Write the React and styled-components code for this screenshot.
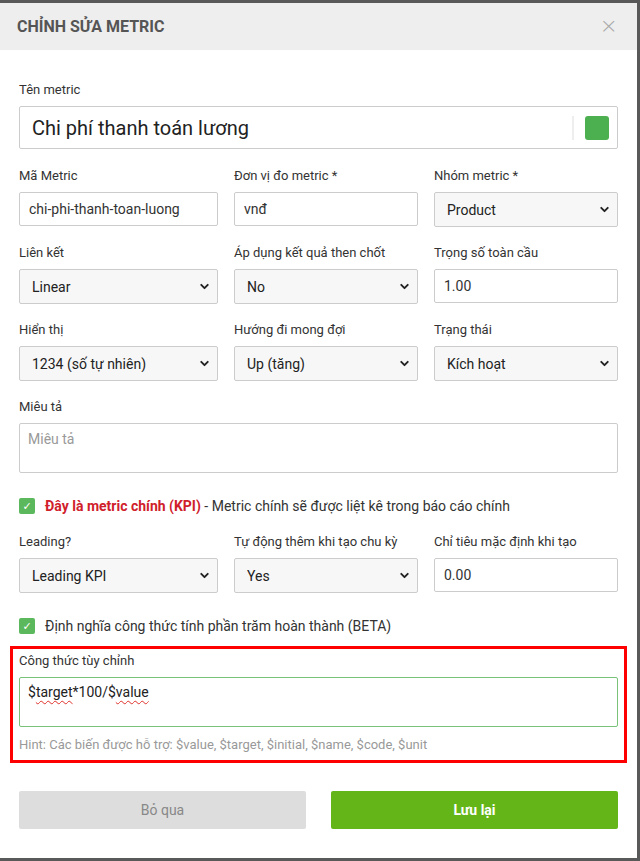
import React from "react";
import styled, { createGlobalStyle } from "styled-components";
import { ChevronDown } from "lucide-react";

const GlobalStyle = createGlobalStyle`
  html, body {
    margin: 0;
    padding: 0;
    background: #595959;
  }
  body {
    font-family: Roboto, "Noto Sans", "Liberation Sans", sans-serif;
    color: #333;
  }
  * { box-sizing: border-box; }
`;

const Backdrop = styled.div`
  padding: 3px 3px 3px 0;
  min-height: 861px;
`;

const Modal = styled.div`
  background: #fff;
  height: 855px;
  display: flex;
  flex-direction: column;
`;

const Header = styled.div`
  height: 47px;
  background: #eeeeee;
  display: flex;
  align-items: center;
  justify-content: space-between;
  padding: 0 17px;
`;

const Title = styled.h4`
  margin: 0;
  font-size: 16px;
  font-weight: 700;
  color: #555;
  text-transform: uppercase;
`;

const Close = styled.button`
  border: 0;
  background: none;
  padding: 0;
  color: #aaa;
  font-size: 22px;
  line-height: 1;
  font-family: "DejaVu Sans", sans-serif;
  font-weight: 300;
  cursor: pointer;
  margin-top: -2px;
  margin-right: 2px;
`;

const Body = styled.div`
  padding: 31px 19px 0;
`;

const Group = styled.div`
  margin-bottom: ${(p) => p.$mb ?? 17}px;
`;

const Label = styled.label`
  display: block;
  font-size: 13px;
  line-height: 17px;
  margin-bottom: 8px;
  color: #333;
`;

const Row = styled.div`
  display: grid;
  grid-template-columns: 199px 1fr 1fr;
  column-gap: 16px;
`;

const Input = styled.input`
  display: block;
  width: 100%;
  height: 34px;
  border: 1px solid #ccc;
  border-radius: 2px;
  padding: 0 9px;
  font-family: inherit;
  font-size: 14px;
  color: #333;
  background: #fff;
  outline: none;
`;

const NameBox = styled.div`
  height: 43px;
  border: 1px solid #ccc;
  border-radius: 2px;
  display: flex;
  align-items: center;
  padding: 0 8px 0 12px;
`;

const NameInput = styled.input`
  flex: 1;
  border: 0;
  outline: none;
  font-family: inherit;
  font-size: 20px;
  color: #222;
  padding: 0;
  background: transparent;
`;

const Divider = styled.span`
  width: 2px;
  height: 24px;
  background: #eee;
  margin: 0 11px 0 0;
`;

const Swatch = styled.span`
  width: 24px;
  height: 24px;
  border-radius: 3px;
  background: ${(p) => p.$color};
`;

const SelectWrap = styled.div`
  position: relative;
`;

const Select = styled.select`
  display: block;
  width: 100%;
  height: 35px;
  appearance: none;
  border: 1px solid #ccc;
  border-radius: 2px;
  background: #f7f7f7;
  padding: 0 28px 0 12px;
  font-family: inherit;
  font-size: 14px;
  color: #222;
  outline: none;
`;

const Arrow = styled(ChevronDown)`
  position: absolute;
  right: 7px;
  top: 11px;
  pointer-events: none;
  color: #222;
`;

const TextArea = styled.textarea`
  display: block;
  width: 100%;
  height: 50px;
  border: 1px solid #ccc;
  border-radius: 2px;
  padding: 7px 8px;
  font-family: inherit;
  font-size: 14px;
  color: #333;
  resize: none;
  outline: none;
  &::placeholder {
    color: #999;
  }
`;

const CheckRow = styled.label`
  display: flex;
  align-items: center;
  gap: 10px;
  height: 20px;
  margin: ${(p) => p.$mt}px 0 ${(p) => p.$mb}px;
  font-size: 14px;
  color: #333;
`;

const Box = styled.span`
  width: 16px;
  height: 16px;
  border-radius: 2px;
  background: #5cb85c;
  color: #fff;
  display: inline-flex;
  align-items: center;
  justify-content: center;
  font-size: 11px;
  font-family: "DejaVu Sans", sans-serif;
`;

const Strong = styled.strong`
  color: #d0202a;
  font-weight: 700;
`;

const Highlight = styled.div`
  margin: 0 -9px;
  border: 3px solid #ff0000;
  padding: 3px 6px 7px;
`;

const FormulaBox = styled.div`
  height: 50px;
  border: 1px solid #78c27a;
  border-radius: 2px;
  padding: 6px 8px;
  font-size: 14px;
  color: #222;
`;

const Typo = styled.span`
  text-decoration: underline wavy #e0312b;
  text-decoration-thickness: 1px;
  text-underline-offset: 3px;
`;

const Hint = styled.p`
  margin: 10px 0 0;
  font-size: 13px;
  line-height: 16px;
  color: #999;
`;

const Actions = styled.div`
  display: grid;
  grid-template-columns: 1fr 1fr;
  column-gap: 25px;
  margin-top: 28px;
`;

const Button = styled.button`
  height: 38px;
  border: 0;
  border-radius: 2px;
  font-family: inherit;
  font-size: 14px;
  cursor: pointer;
  background: ${(p) => (p.$primary ? "#64b618" : "#dddddd")};
  color: ${(p) => (p.$primary ? "#fff" : "#888")};
  font-weight: ${(p) => (p.$primary ? 700 : 400)};
`;

function Field({ label, children }) {
  return (
    <div>
      <Label>{label}</Label>
      {children}
    </div>
  );
}

function Dropdown({ value, options }) {
  return (
    <SelectWrap>
      <Select defaultValue={value}>
        {options.map((o) => (
          <option key={o}>{o}</option>
        ))}
      </Select>
      <Arrow size={13} strokeWidth={3.5} />
    </SelectWrap>
  );
}

export default function App() {
  return (
    <>
      <GlobalStyle />
      <Backdrop>
        <Modal>
          <Header>
            <Title>Chỉnh sửa metric</Title>
            <Close>×</Close>
          </Header>
          <Body>
            <Group $mb={18}>
              <Label>Tên metric</Label>
              <NameBox>
                <NameInput defaultValue="Chi phí thanh toán lương" />
                <Divider />
                <Swatch $color="#4caf50" />
              </NameBox>
            </Group>

            <Group>
              <Row>
                <Field label="Mã Metric">
                  <Input defaultValue="chi-phi-thanh-toan-luong" />
                </Field>
                <Field label="Đơn vị đo metric *">
                  <Input defaultValue="vnđ" />
                </Field>
                <Field label="Nhóm metric *">
                  <Dropdown value="Product" options={["Product", "Marketing", "Sales"]} />
                </Field>
              </Row>
            </Group>

            <Group>
              <Row>
                <Field label="Liên kết">
                  <Dropdown value="Linear" options={["Linear", "Step"]} />
                </Field>
                <Field label="Áp dụng kết quả then chốt">
                  <Dropdown value="No" options={["No", "Yes"]} />
                </Field>
                <Field label="Trọng số toàn cầu">
                  <Input defaultValue="1.00" />
                </Field>
              </Row>
            </Group>

            <Group>
              <Row>
                <Field label="Hiển thị">
                  <Dropdown value="1234 (số tự nhiên)" options={["1234 (số tự nhiên)", "12.34 (số thập phân)"]} />
                </Field>
                <Field label="Hướng đi mong đợi">
                  <Dropdown value="Up (tăng)" options={["Up (tăng)", "Down (giảm)"]} />
                </Field>
                <Field label="Trạng thái">
                  <Dropdown value="Kích hoạt" options={["Kích hoạt", "Tạm dừng"]} />
                </Field>
              </Row>
            </Group>

            <Group $mb={0}>
              <Label>Miêu tả</Label>
              <TextArea placeholder="Miêu tả" />
            </Group>

            <CheckRow $mt={23} $mb={17}>
              <Box>✓</Box>
              <span>
                <Strong>Đây là metric chính (KPI)</Strong> - Metric chính sẽ được liệt kê trong báo cáo chính
              </span>
            </CheckRow>

            <Group $mb={0}>
              <Row>
                <Field label="Leading?">
                  <Dropdown value="Leading KPI" options={["Leading KPI", "Lagging KPI"]} />
                </Field>
                <Field label="Tự động thêm khi tạo chu kỳ">
                  <Dropdown value="Yes" options={["Yes", "No"]} />
                </Field>
                <Field label="Chỉ tiêu mặc định khi tạo">
                  <Input defaultValue="0.00" />
                </Field>
              </Row>
            </Group>

            <CheckRow $mt={23} $mb={10}>
              <Box>✓</Box>
              <span>Định nghĩa công thức tính phần trăm hoàn thành (BETA)</span>
            </CheckRow>

            <Highlight>
              <Label>Công thức tùy chỉnh</Label>
              <FormulaBox>
                $<Typo>target</Typo>*100/$<Typo>value</Typo>
              </FormulaBox>
              <Hint>Hint: Các biến được hỗ trợ: $value, $target, $initial, $name, $code, $unit</Hint>
            </Highlight>

            <Actions>
              <Button>Bỏ qua</Button>
              <Button $primary>Lưu lại</Button>
            </Actions>
          </Body>
        </Modal>
      </Backdrop>
    </>
  );
}
